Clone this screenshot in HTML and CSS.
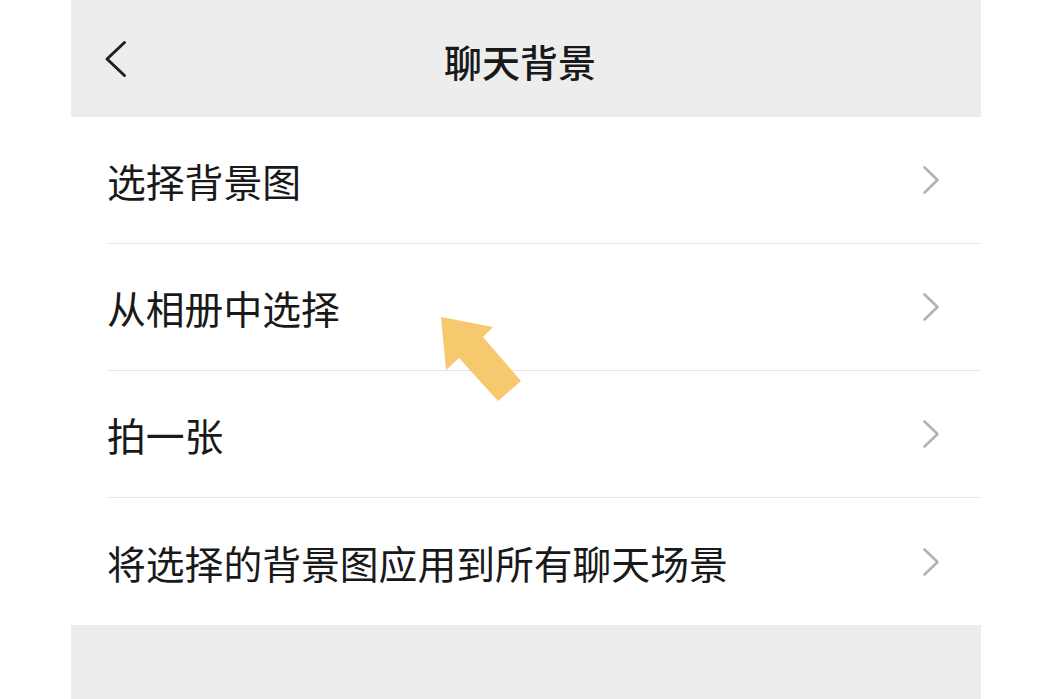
FILE: index.html
```html
<!DOCTYPE html>
<html lang="zh-CN">
<head>
<meta charset="utf-8">
<title>聊天背景</title>
<link rel="stylesheet" href="styles.css">
</head>
<body>
<div class="panel">
  <header class="topbar">
    <span class="back">
      <svg width="24" height="40" viewBox="0 0 24 40"><polyline points="20.5,3.5 3,20 20.5,36.5" fill="none" stroke="#1f1f1f" stroke-width="3" stroke-linecap="round" stroke-linejoin="round"/></svg>
    </span>
    <h1 class="title">聊天背景</h1>
  </header>
  <ul class="list">
    <li class="row"><span class="label">选择背景图</span><svg class="chev" width="18" height="30" viewBox="0 0 18 30"><polyline points="2.5,2.5 15.5,15 2.5,27.5" fill="none" stroke="#b2b2b2" stroke-width="2.6" stroke-linecap="round" stroke-linejoin="round"/></svg></li>
    <li class="row"><span class="label">从相册中选择</span><svg class="chev" width="18" height="30" viewBox="0 0 18 30"><polyline points="2.5,2.5 15.5,15 2.5,27.5" fill="none" stroke="#b2b2b2" stroke-width="2.6" stroke-linecap="round" stroke-linejoin="round"/></svg></li>
    <li class="row"><span class="label">拍一张</span><svg class="chev" width="18" height="30" viewBox="0 0 18 30"><polyline points="2.5,2.5 15.5,15 2.5,27.5" fill="none" stroke="#b2b2b2" stroke-width="2.6" stroke-linecap="round" stroke-linejoin="round"/></svg></li>
    <li class="row"><span class="label">将选择的背景图应用到所有聊天场景</span><svg class="chev" width="18" height="30" viewBox="0 0 18 30"><polyline points="2.5,2.5 15.5,15 2.5,27.5" fill="none" stroke="#b2b2b2" stroke-width="2.6" stroke-linecap="round" stroke-linejoin="round"/></svg></li>
  </ul>
  <div class="footer"></div>
  <svg class="pointer" width="90" height="94" viewBox="0 0 90 94"><polygon points="5,5 57,15 47,25 85,69 62,89 23,46 10,58" fill="#f6c96f"/></svg>
</div>
</body>
</html>
```

FILE: styles.css
```css
html, body {
  margin: 0;
  padding: 0;
  background: #ffffff;
}
body {
  font-family: "Noto Sans CJK SC", "Noto Sans", sans-serif;
  color: #191919;
}
.panel {
  position: relative;
  width: 910px;
  height: 699px;
  margin-left: 71px;
  display: flex;
  flex-direction: column;
  background: #ededed;
}
.topbar {
  height: 117px;
  box-sizing: border-box;
  padding: 4px 69px 0 33px;
  display: flex;
  align-items: center;
  background: #ededed;
}
.back {
  display: flex;
  width: 24px;
  height: 40px;
  margin-top: -4px;
}
.title {
  flex: 1;
  margin: 0;
  text-align: center;
  font-size: 38px;
  font-weight: 500;
  line-height: 1;
  color: #191919;
}
.list {
  list-style: none;
  margin: 0;
  padding: 0;
  background: #ffffff;
}
.row {
  height: 127px;
  box-sizing: border-box;
  margin-left: 36px;
  padding: 0 41px 0 0;
  display: flex;
  align-items: center;
  justify-content: space-between;
  border-bottom: 1px solid #e6e6e6;
}
.row:last-child {
  border-bottom: none;
}
.label {
  font-size: 38.8px;
  line-height: 1;
  padding-top: 1px;
  color: #191919;
}
.chev {
  display: block;
}
.footer {
  flex: 1;
  background: #ededed;
}
.pointer {
  position: absolute;
  left: 365px;
  top: 312px;
}
```
